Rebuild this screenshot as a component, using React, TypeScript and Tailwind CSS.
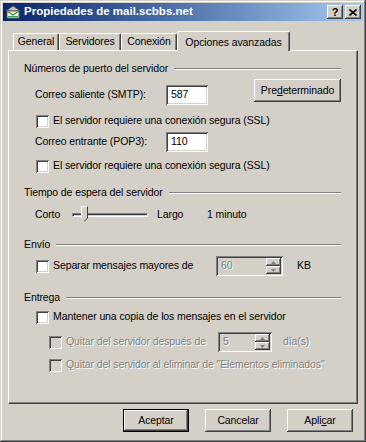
import React from 'react';

const font = { fontFamily: '"Liberation Sans", Arial, sans-serif' };

const raised =
  'shadow-[inset_-1px_-1px_#404040,inset_1px_1px_#ffffff,inset_-2px_-2px_#808080,inset_2px_2px_#d4d0c8]';
const sunken =
  'shadow-[inset_1px_1px_#808080,inset_-1px_-1px_#ffffff,inset_2px_2px_#404040,inset_-2px_-2px_#d4d0c8]';
const disabledText = 'text-[#808080] [text-shadow:1px_1px_0_#ffffff]';

function Checkbox({ disabled = false }: { disabled?: boolean }) {
  return <div className={`w-[13px] h-[13px] shrink-0 ${disabled ? 'bg-[#d4d0c8]' : 'bg-white'} ${sunken}`} />;
}

function TextBox({ value, w }: { value: string; w: string }) {
  return (
    <div className={`${w} h-[20px] bg-white ${sunken} flex items-center pl-[5px] text-black`}>{value}</div>
  );
}

function SpinBox({ value, w }: { value: string; w: string }) {
  return (
    <div className={`${w} h-[20px] bg-[#d4d0c8] ${sunken} flex items-stretch p-[2px]`}>
      <div className={`flex-1 flex items-center pl-[3px] ${disabledText}`}>{value}</div>
      <div className="w-[15px] flex flex-col">
        <div className={`flex-1 ${raised} flex items-center justify-center`}>
          <svg width="5" height="3" viewBox="0 0 5 3">
            <path d="M2.5 0 L5 3 L0 3 Z" fill="#808080" />
          </svg>
        </div>
        <div className={`flex-1 ${raised} flex items-center justify-center`}>
          <svg width="5" height="3" viewBox="0 0 5 3">
            <path d="M0 0 L5 0 L2.5 3 Z" fill="#808080" />
          </svg>
        </div>
      </div>
    </div>
  );
}

function GroupLabel({ children, mt }: { children: React.ReactNode; mt: string }) {
  return (
    <div className={`${mt} h-[14px] flex items-center gap-[6px] pr-[16px]`}>
      <span>{children}</span>
      <div className="flex-1 h-[2px] border-t border-[#808080] border-b border-b-white" />
    </div>
  );
}

function Button({
  children,
  isDefault = false,
  w = 'w-[66px]',
  h = 'h-[23px]',
}: {
  children: React.ReactNode;
  isDefault?: boolean;
  w?: string;
  h?: string;
}) {
  return (
    <div
      className={`${w} ${h} shrink-0 bg-[#d4d0c8] flex items-center justify-center ${
        isDefault
          ? 'border border-black shadow-[inset_-1px_-1px_#404040,inset_1px_1px_#ffffff,inset_-2px_-2px_#808080]'
          : raised
      }`}
    >
      {children}
    </div>
  );
}

function TitleIcon() {
  return (
    <svg width="16" height="16" viewBox="0 0 16 16">
      <path d="M1 7 L8 2 L15 7 Z" fill="#c0c0c0" stroke="#606060" strokeWidth="1" />
      <rect x="2" y="7" width="12" height="7" fill="#f8f4d0" stroke="#606060" strokeWidth="1" />
      <path d="M2 7 L8 11 L14 7" fill="none" stroke="#2f8f4f" strokeWidth="1.2" />
      <rect x="3" y="12" width="10" height="1" fill="#3aa060" />
    </svg>
  );
}

export default function App() {
  const tabs = [
    { name: 'General', w: 'w-[46px]' },
    { name: 'Servidores', w: 'w-[62px]' },
    { name: 'Conexión', w: 'w-[56px]' },
  ];

  return (
    <div
      className="w-[366px] h-[442px] bg-[#d4d0c8] p-[3px] flex flex-col text-[10.5px] tracking-[-0.1px] whitespace-nowrap text-black shadow-[inset_-1px_-1px_#404040,inset_1px_1px_#d4d0c8,inset_-2px_-2px_#808080,inset_2px_2px_#ffffff] overflow-hidden"
      style={font}
    >
      {/* Title bar */}
      <div className="h-[18px] shrink-0 bg-gradient-to-r from-[#0a246a] to-[#a6caf0] flex items-center pl-[2px] pr-[2px]">
        <TitleIcon />
        <span className="ml-[3px] text-white font-bold text-[11.5px] tracking-normal flex-1">
          Propiedades de mail.scbbs.net
        </span>
        <div className={`w-[16px] h-[14px] bg-[#d4d0c8] ${raised} flex items-center justify-center font-bold text-[11px]`}>
          ?
        </div>
        <div className={`ml-[2px] w-[16px] h-[14px] bg-[#d4d0c8] ${raised} flex items-center justify-center`}>
          <svg width="8" height="7" viewBox="0 0 8 7">
            <path d="M0.5 0.5 L7.5 6.5 M7.5 0.5 L0.5 6.5" stroke="#000" strokeWidth="1.6" />
          </svg>
        </div>
      </div>

      {/* Tabs */}
      <div className="mt-[10px] ml-[5px] mr-[5px] h-[19px] shrink-0 flex items-end relative z-10 pl-[5px]">
        {tabs.map(t => (
          <div
            key={t.name}
            className={`${t.w} h-[17px] border-t border-l border-white border-r border-r-[#404040] shadow-[inset_-1px_0_#808080] rounded-t-[2px] flex items-center justify-center`}
          >
            {t.name}
          </div>
        ))}
        <div className="w-[113px] h-[20px] -mb-[1px] bg-[#d4d0c8] border-t border-l border-white border-r border-r-[#404040] shadow-[inset_-1px_0_#808080] rounded-t-[2px] flex items-start pt-[3px] justify-center">
          Opciones avanzadas
        </div>
      </div>

      {/* Panel */}
      <div className="ml-[5px] mr-[5px] h-[354px] shrink-0 border-t border-l border-white border-r border-b border-r-[#404040] border-b-[#404040] shadow-[inset_-1px_-1px_#808080] flex flex-col pl-[15px] min-w-0">
        <GroupLabel mt="mt-[11px]">Números de puerto del servidor</GroupLabel>

        <div className="mt-[3px] flex min-w-0">
          <div className="flex-1 min-w-0 flex flex-col pt-[6px] pl-[11px]">
            <div className="h-[20px] flex items-center">
              <span className="w-[131px]">Correo saliente (SMTP):</span>
              <TextBox value="587" w="w-[42px]" />
            </div>
            <div className="mt-[8px] h-[16px] flex items-center gap-[4px] pl-[1px]">
              <Checkbox />
              <span>El servidor requiere una conexión segura (SSL)</span>
            </div>
            <div className="mt-[3px] h-[20px] flex items-center">
              <span className="w-[131px]">Correo entrante (POP3):</span>
              <TextBox value="110" w="w-[42px]" />
            </div>
            <div className="mt-[6px] h-[16px] flex items-center gap-[4px] pl-[1px]">
              <Checkbox />
              <span>El servidor requiere una conexión segura (SSL)</span>
            </div>
          </div>
          <div className="mr-[16px]">
            <Button w="w-[87px]" h="h-[23px]">
              <span>
                Pre<span className="underline">d</span>eterminado
              </span>
            </Button>
          </div>
        </div>

        <GroupLabel mt="mt-[12px]">Tiempo de espera del servidor</GroupLabel>
        <div className="mt-[7px] h-[16px] flex items-center pl-[11px]">
          <span className="w-[37px]">Corto</span>
          <div className="relative w-[76px] h-[14px] flex items-center">
            <div className="w-full h-[4px] border-t border-l border-[#808080] border-b border-r border-b-white border-r-white bg-[#d4d0c8] shadow-[inset_1px_1px_#404040]" />
            <svg className="absolute left-[9px] top-[-2px]" width="7" height="16" viewBox="0 0 7 16">
              <path d="M0.5 0.5 H6.5 V12 L3.5 15 L0.5 12 Z" fill="#d4d0c8" />
              <path d="M0.5 12 V0.5 H6" fill="none" stroke="#fff" />
              <path d="M6.5 0.5 V12 L3.5 15.2" fill="none" stroke="#404040" />
            </svg>
          </div>
          <span className="ml-[9px] w-[50px]">Largo</span>
          <span>1 minuto</span>
        </div>

        <GroupLabel mt="mt-[15px]">Envío</GroupLabel>
        <div className="mt-[4px] h-[20px] flex items-center pl-[12px]">
          <Checkbox />
          <span className="ml-[4px] w-[163px]">Separar mensajes mayores de</span>
          <SpinBox value="60" w="w-[67px]" />
          <span className="ml-[14px]">KB</span>
        </div>

        <GroupLabel mt="mt-[15px]">Entrega</GroupLabel>
        <div className="mt-[4px] h-[16px] flex items-center pl-[12px]">
          <Checkbox />
          <span className="ml-[4px]">Mantener una copia de los mensajes en el servidor</span>
        </div>
        <div className="mt-[7px] h-[20px] flex items-center pl-[25px]">
          <Checkbox disabled />
          <span className={`ml-[4px] w-[152px] ${disabledText}`}>Quitar del servidor después de</span>
          <SpinBox value="5" w="w-[54px]" />
          <span className={`ml-[11px] ${disabledText}`}>día(s)</span>
        </div>
        <div className="mt-[5px] h-[16px] flex items-center pl-[25px]">
          <Checkbox disabled />
          <span className={`ml-[4px] ${disabledText}`}>Quitar del servidor al eliminar de "Elementos eliminados"</span>
        </div>
      </div>

      {/* Buttons */}
      <div className="mt-[5px] flex justify-end gap-[16px] pr-[10px]">
        <Button isDefault>Aceptar</Button>
        <Button>Cancelar</Button>
        <Button>
          <span>
            Apli<span className="underline">c</span>ar
          </span>
        </Button>
      </div>
    </div>
  );
}
